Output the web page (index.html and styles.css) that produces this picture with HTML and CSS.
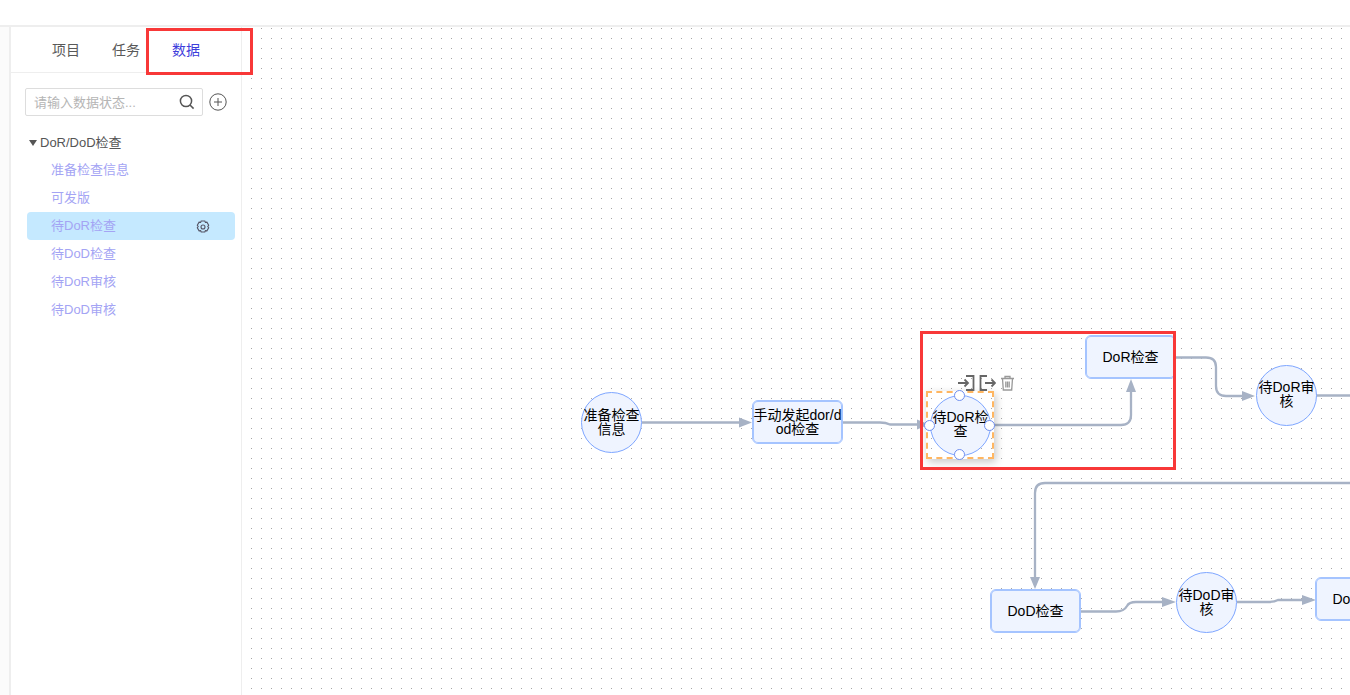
FILE: index.html
```html
<!DOCTYPE html>
<html lang="zh-CN">
<head>
<meta charset="utf-8">
<title>数据流程</title>
<link rel="stylesheet" href="styles.css">
</head>
<body>
<div class="app">
  <div class="topbar"></div>
  <div class="main">
    <aside class="sidebar">
      <nav class="tabs">
        <span class="tab">项目</span>
        <span class="tab">任务</span>
        <span class="tab tab-active">数据</span>
      </nav>
      <div class="search-row">
        <div class="search">
          <span class="placeholder">请输入数据状态...</span>
          <svg class="icon-search" width="16" height="16" viewBox="0 0 16 16"><circle cx="7" cy="7" r="5.6"/><path d="M11 11l3.6 3.6"/></svg>
        </div>
        <svg class="icon-add" width="18" height="18" viewBox="0 0 18 18"><circle cx="9" cy="9" r="8.2"/><path d="M9 5v8M5 9h8"/></svg>
      </div>
      <div class="tree">
        <div class="tree-head"><span class="caret"></span>DoR/DoD检查</div>
        <div class="tree-item">准备检查信息</div>
        <div class="tree-item">可发版</div>
        <div class="tree-item tree-item-active">待DoR检查
          <svg class="icon-gear" width="14" height="14" viewBox="0 0 14 14"><path d="M5.200 1h3.600l.6 1.400 1.500-.2 1.800 3.100-.9 1.200.9 1.200-1.800 3.100-1.500-.2-.6 1.400H5.200l-.6-1.400-1.500.2-1.800-3.100.9-1.200-.9-1.200 1.800-3.100 1.500.2z"/><circle cx="7" cy="7" r="2"/></svg>
        </div>
        <div class="tree-item">待DoD检查</div>
        <div class="tree-item">待DoR审核</div>
        <div class="tree-item">待DoD审核</div>
      </div>
    </aside>
    <section class="canvas"></section>
  </div>

  <div class="diagram">
    <svg class="edges" width="1350" height="695" viewBox="0 0 1350 695">
      <g class="edge">
        <path d="M642 422.500H740"/>
        <path d="M843 422.500H880Q886 422.500 890 424.500H918"/>
        <path d="M990 425H1121Q1131 425 1131 415V392"/>
        <path d="M1176 357.500H1206Q1216 357.500 1216 367V386Q1216 396 1226 396H1243"/>
        <path d="M1316 395.500H1350"/>
        <path d="M1350 483H1045Q1035 483 1035 493V577"/>
        <path d="M1081 611.500H1116Q1124 611.500 1127 606Q1129 602 1136 602H1163"/>
        <path d="M1237 602H1268Q1274 602 1278 600H1303"/>
      </g>
      <g class="heads">
        <path d="M752 422.500L739 417.500V427.500z"/>
        <path d="M929 424.500L917 419.500V429.500z"/>
        <path d="M1131 379L1126 392H1136z"/>
        <path d="M1255 396L1242 391V401z"/>
        <path d="M1035 589L1030 577H1040z"/>
        <path d="M1176 602L1162 597V607z"/>
        <path d="M1316 600L1302 595V605z"/>
      </g>
    </svg>

    <div class="node circle n-prep">准备检查信息</div>
    <div class="node rect n-manual">手动发起dor/dod检查</div>
    <div class="selection"></div>
    <div class="node circle n-dor-wait">待DoR检查</div>
    <div class="node rect n-dor">DoR检查</div>
    <div class="node circle n-dor-audit">待DoR审核</div>
    <div class="node rect n-dod">DoD检查</div>
    <div class="node circle n-dod-audit">待DoD审核</div>
    <div class="node rect n-dod-last">DoD审核</div>

    <span class="anchor a-top"></span>
    <span class="anchor a-left"></span>
    <span class="anchor a-right"></span>
    <span class="anchor a-bottom"></span>

    <div class="node-tools">
      <svg class="tool" width="18" height="16" viewBox="0 0 18 16"><path d="M9 1h7.500v14H9M1 8h10M7.500 4.500L11 8l-3.500 3.500"/></svg>
      <svg class="tool" width="17" height="16" viewBox="0 0 17 16"><path d="M8 1H1.500v14H8M6 8h10M12.500 4.500L16 8l-3.500 3.500"/></svg>
      <svg class="tool tool-muted" width="15" height="16" viewBox="0 0 15 16"><path d="M1 3.500h13M5 3.500V1.500h5v2M2.500 3.500l.8 11.500h8.400l.8-11.500M5.800 6.500v6M7.500 6.500v6M9.200 6.500v6"/></svg>
    </div>

    <div class="mark mark-tab"></div>
    <div class="mark mark-node"></div>
  </div>
</div>
</body>
</html>
```
FILE: styles.css
```css
* { box-sizing: border-box; }
html, body { margin: 0; height: 100%; }
body {
  overflow: hidden;
  background: #fff;
  font-family: "Liberation Sans", "Noto Sans CJK SC", sans-serif;
}
.app {
  position: relative;
  width: 1350px;
  height: 695px;
  overflow: hidden;
  display: flex;
  flex-direction: column;
}
.topbar { height: 25px; flex: none; }
.main {
  flex: 1;
  display: flex;
  padding-left: 9px;
  background: #fbfbfb;
  border-top: 2px solid #eee;
  min-height: 0;
}
.sidebar {
  width: 233px;
  flex: none;
  background: #fff;
  border-left: 2px solid #eee;
  border-right: 1px solid #eee;
}
.tabs {
  height: 46px;
  display: flex;
  padding-left: 41px;
  gap: 32px;
  border-bottom: 1px solid #eee;
}
.tab {
  width: 28px;
  height: 46px;
  font-size: 14px;
  line-height: 46px;
  color: #595959;
  white-space: nowrap;
}
.tab-active {
  color: #3e3edb;
  border-bottom: 1px solid #3e3edb;
}
.search-row {
  display: flex;
  align-items: center;
  gap: 6px;
  padding: 15px 0 0 14px;
}
.search {
  width: 178px;
  height: 28px;
  display: flex;
  align-items: center;
  justify-content: space-between;
  padding: 0 7px 0 8px;
  border: 1px solid #ddd;
  border-radius: 2px;
}
.placeholder { font-size: 13px; color: #b5b5b5; margin: 0 0 2px 0; }
.icon-search { fill: none; stroke: #555; stroke-width: 1.500; }
.icon-add { fill: none; stroke: #555; stroke-width: 1; }
.tree { padding: 12px 6px 0 16px; }
.tree-head {
  height: 28px;
  padding-bottom: 2px;
  display: flex;
  align-items: center;
  font-size: 13px;
  color: #555;
}
.caret {
  width: 0;
  height: 0;
  margin: 3px 3px 0 2px;
  border-style: solid;
  border-width: 6px 4.500px 0;
  border-color: #555 transparent transparent;
}
.tree-item {
  height: 28px;
  display: flex;
  align-items: center;
  justify-content: space-between;
  padding: 0 25px 3px 24px;
  font-size: 13px;
  color: #a4a4f4;
}
.tree-item-active { background: #c5e9ff; border-radius: 4px; }
.icon-gear { fill: none; stroke: #556; stroke-width: 1.100; margin-top: 5px; }
.canvas {
  flex: 1;
  background-color: #fff;
  background-image: radial-gradient(circle at 0.5px 0.5px, #a6a6a6 0.5px, transparent 0.7px);
  background-size: 10px 10px;
  background-position: 9px 1px;
}

/* Free canvas: all coordinates below are in page space */
.diagram { position: absolute; inset: 0; }
.edges { position: absolute; left: 0; top: 0; }
.edge path { fill: none; stroke: #a7b2c5; stroke-width: 2.300; }
.heads path { fill: #a7b2c5; }
.node {
  position: absolute;
  display: flex;
  align-items: center;
  justify-content: center;
  text-align: center;
  font-size: 14px;
  line-height: 14px;
  color: #000;
  word-break: break-all;
  background: #eff4ff;
}
.rect {
  width: 91px;
  height: 44px;
  border-radius: 6px;
  border: 1px solid #a5c4ff;
  box-shadow: inset 0 0 0 1px #a5c4ff;
}
.circle {
  width: 61px;
  height: 61px;
  padding-bottom: 2px;
  border-radius: 50%;
  border: 1px solid #7ea6ff;
}
.n-prep { left: 581px; top: 392px; }
.n-manual { left: 752px; top: 400px; }
.n-dor-wait { left: 930px; top: 395px; padding-bottom: 4px; }
.n-dor { left: 1085px; top: 335px; }
.n-dor-audit { left: 1256px; top: 365px; padding-bottom: 4px; }
.n-dod { left: 990px; top: 589px; }
.n-dod-audit { left: 1176px; top: 572px; }
.n-dod-last { left: 1315px; top: 577px; }
.selection {
  position: absolute;
  left: 926px;
  top: 391px;
  width: 68px;
  height: 68px;
  border: 2px dashed #ffb661;
  box-shadow: 2px 3px 8px rgba(0, 0, 0, 0.22);
}
.anchor {
  position: absolute;
  width: 11px;
  height: 11px;
  border-radius: 50%;
  background: #fff;
  border: 1.500px solid #6f8ff0;
}
.a-top { left: 954px; top: 390px; }
.a-left { left: 924px; top: 420px; }
.a-right { left: 984px; top: 420px; }
.a-bottom { left: 954px; top: 449px; }
.node-tools {
  position: absolute;
  left: 957px;
  top: 375px;
  display: flex;
  gap: 4px;
}
.tool { fill: none; stroke: #666; stroke-width: 1.800; }
.tool-muted { stroke: #999; stroke-width: 1.300; }
.mark { position: absolute; border: 3px solid #f83838; }
.mark-tab { left: 146px; top: 28px; width: 107px; height: 47px; }
.mark-node { left: 920px; top: 331px; width: 256px; height: 139px; }
```
